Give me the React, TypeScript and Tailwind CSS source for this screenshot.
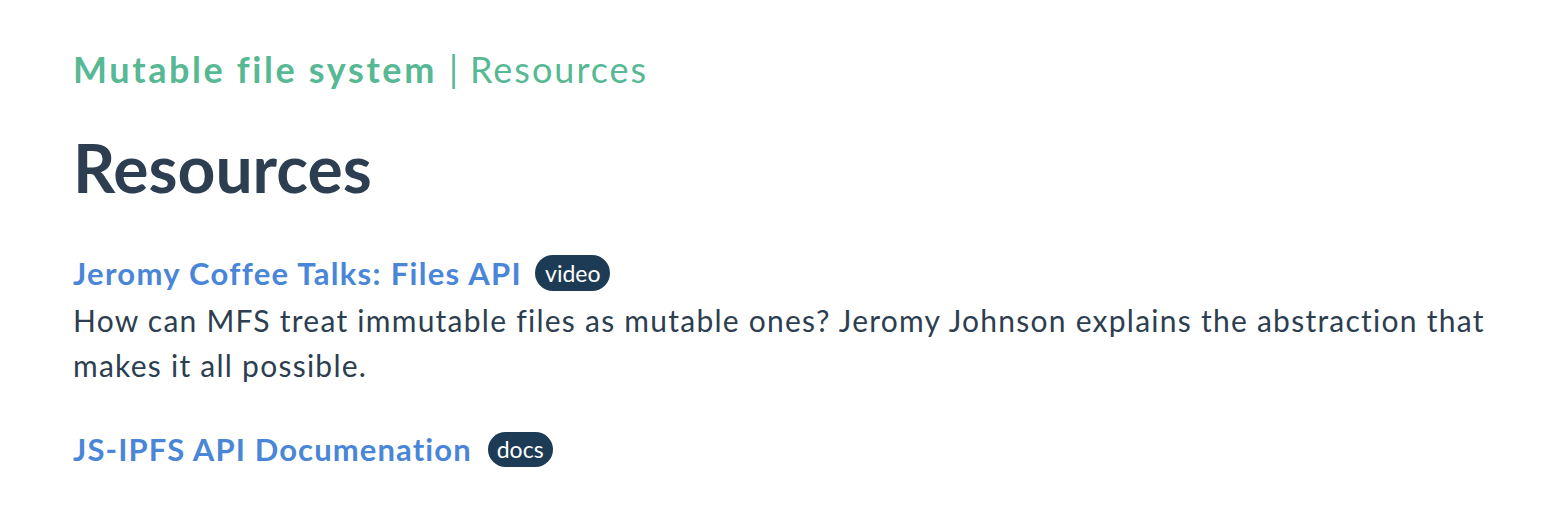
export default function App() {
  return (
    <div className="min-h-screen bg-white font-['Lato',sans-serif] text-[#2c3e50]">
      <div className="pl-[73px] pt-[44px] w-[1513px]">
        <div className="text-[36px] leading-[50px] text-[#57b894] whitespace-nowrap">
          <span className="font-bold tracking-[2.6px]">Mutable file system</span>
          <span className="mx-[12px]">|</span>
          <span className="tracking-[2px]">Resources</span>
        </div>
        <h1 className="mt-[34px] text-[66px] leading-[80px] font-bold text-[#2c3e50]">Resources</h1>
        <div className="mt-[45px]">
          <div className="flex items-center gap-[13px]">
            <a href="#" className="text-[31px] leading-[40px] font-bold tracking-[1.3px] text-[#4a86d8]">
              Jeromy Coffee Talks: Files API
            </a>
            <span className="rounded-full bg-[#1d3b54] px-[10px] text-[23px] leading-[36px] text-white">video</span>
          </div>
          <p className="mt-[5px] text-[30px] leading-[45px] tracking-[1.25px]">
            How can MFS treat immutable files as mutable ones? Jeromy Johnson explains the abstraction that makes it all possible.
          </p>
        </div>
        <div className="mt-[41px] flex items-center gap-[16px]">
          <a href="#" className="text-[31px] leading-[40px] font-bold tracking-[1.1px] text-[#4a86d8]">
            JS-IPFS API Documenation
          </a>
          <span className="rounded-full bg-[#1d3b54] px-[9px] text-[23px] leading-[35px] text-white">docs</span>
        </div>
      </div>
    </div>
  )
}
